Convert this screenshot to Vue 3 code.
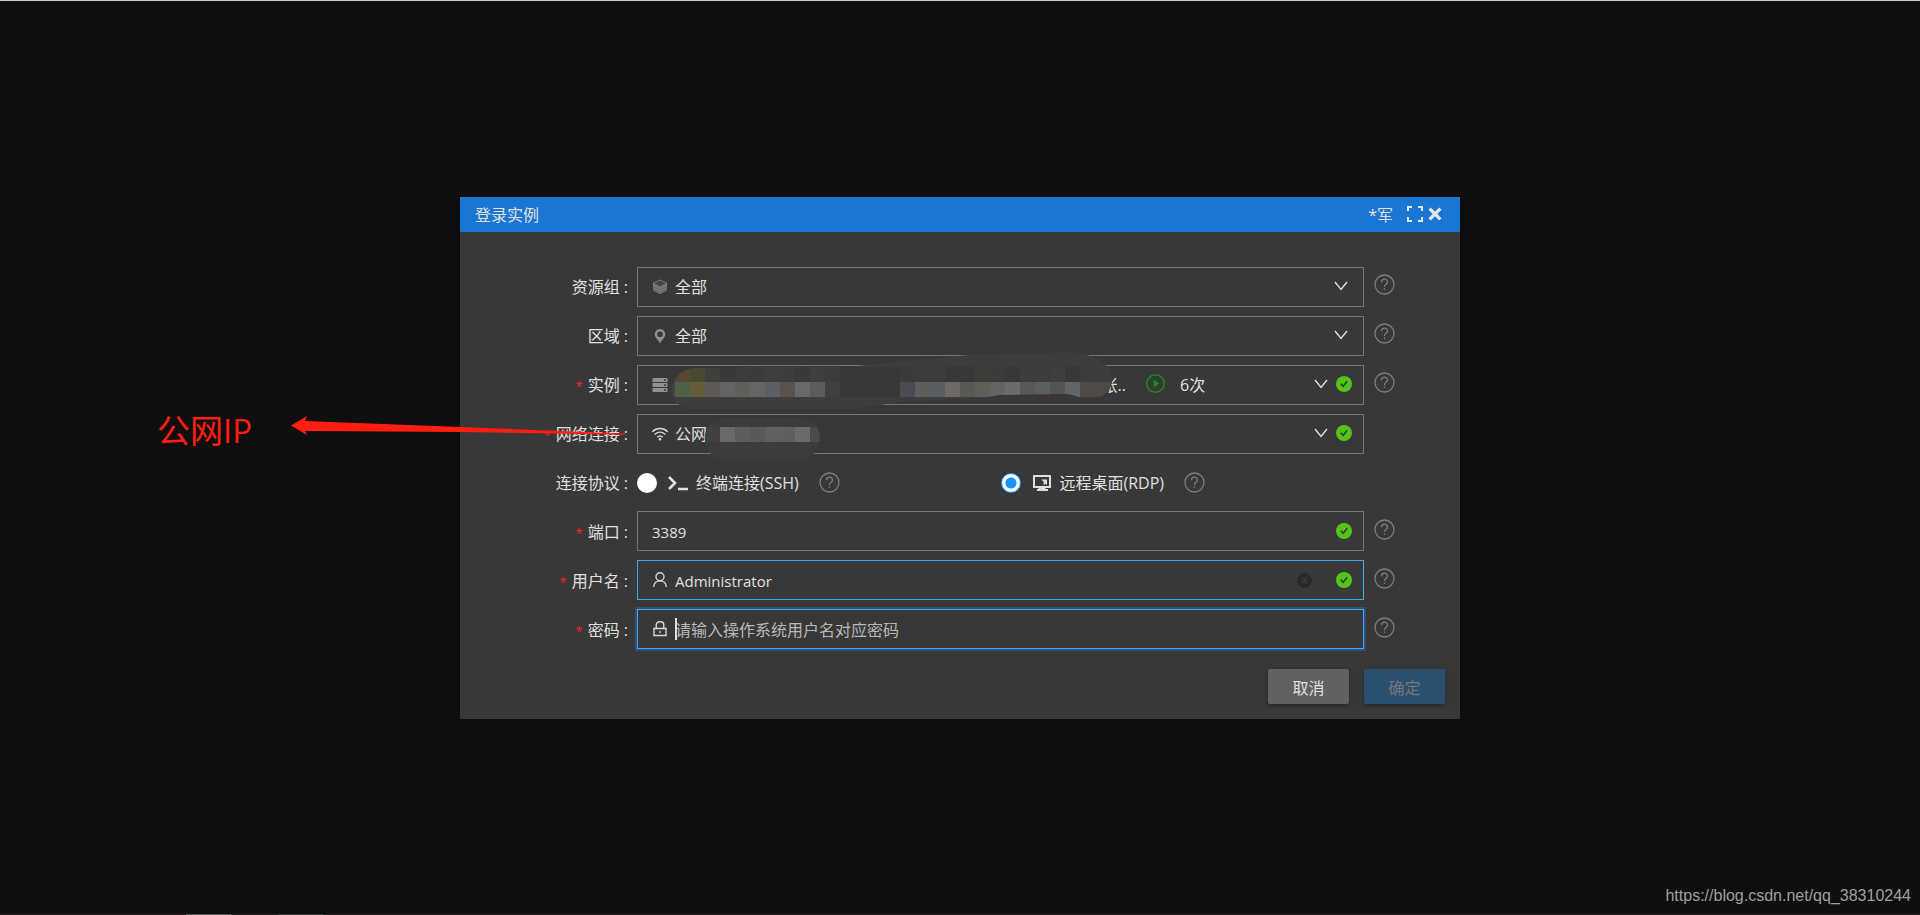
<script setup>
import { ref } from 'vue'

const protocol = ref('rdp')
const port = ref('3389')
const username = ref('Administrator')
const password = ref('')

const nameLower = [
  [660, '#444444'], [675, '#4f6048'], [690, '#655c38'], [705, '#5c5a57'], [720, '#656364'], [735, '#5f5f5b'],
  [750, '#656565'], [765, '#5c6064'], [780, '#57534d'], [795, '#666a6c'], [810, '#5c5c5c'],
  [825, '#42403c'], [840, '#383838'], [855, '#383838'], [870, '#383838'], [885, '#383838'],
  [900, '#4b4c51'], [915, '#5f5d59'], [930, '#5a5e62'], [945, '#6d6a67'], [960, '#5a5855'],
  [975, '#5f5f58'], [990, '#636462'], [1005, '#6d6b68'], [1020, '#575859'], [1035, '#5a5f60'],
  [1050, '#545454'], [1065, '#636468'], [1080, '#4d4a47'], [1095, '#4d4a47'],
]
const nameUpper = [
  [675, '#574733'], [690, '#474a33'], [705, '#3f3f3e'], [720, '#393939'], [735, '#3c3c3c'],
  [750, '#3b3b3b'], [765, '#3e3e3e'], [780, '#3e3d3c'], [795, '#393939'], [810, '#3f3f3f'],
  [825, '#3d3c3b'], [840, '#383838'], [855, '#383838'], [870, '#383838'], [885, '#383838'],
  [900, '#393c3b'], [915, '#3d3c3b'], [930, '#3a3c3e'], [945, '#383838'], [960, '#383838'],
  [975, '#3d3c3b'], [990, '#393c3b'], [1005, '#383838'], [1020, '#3d3d3d'], [1035, '#3d3d3d'],
  [1050, '#3f3f3f'], [1065, '#383838'], [1080, '#3d3c39'], [1095, '#3d3d3d'],
]
const ipBlocks = [
  [720, '#6a686a'], [735, '#5c5d60'], [750, '#5a5958'], [765, '#606063'],
  [780, '#5f5e60'], [795, '#686a6d'], [810, '#4d4b49'],
]
</script>

<template>
  <main class="page">
    <section class="dialog" role="dialog" aria-labelledby="dialog-title">
      <header class="titlebar">
        <h1 id="dialog-title">登录实例</h1>
        <span class="account">*军</span>
        <button class="bar-btn" type="button" aria-label="全屏">
          <svg width="16" height="16" viewBox="0 0 16 16" fill="none" stroke="#e2e6ea" stroke-width="2"><path d="M1 5V1h4M11 1h4v4M15 11v4h-4M5 15H1v-4" /></svg>
        </button>
        <button class="bar-btn close" type="button" aria-label="关闭">
          <svg width="14" height="14" viewBox="0 0 14 14" stroke="#e2e6ea" stroke-width="3.4"><path d="M1.600 1.600l10.800 10.800M12.400 1.600L1.600 12.400" /></svg>
        </button>
      </header>

      <form class="form" @submit.prevent>
        <div class="row">
          <label class="label" for="group">资源组<i>:</i></label>
          <div class="field">
            <svg class="lead" viewBox="0 0 16 16"><path d="M8 1L1 4.300l7 3.500 7-3.500z" fill="#444" stroke="#8a8a8a" stroke-width=".8" /><path d="M1 4.800v6.700L8 15V8.200zM15 4.800v6.700L8 15V8.200z" fill="#7d7d7d" /><path d="M1 7.300l7 3.500 7-3.500M1 9.800l7 3.500 7-3.500" fill="none" stroke="#555" stroke-width=".7" /></svg>
            <select id="group" class="control"><option>全部</option></select>
            <svg class="chevron last" viewBox="0 0 14 10"><path d="M1 1l6 7.500L13 1" /></svg>
          </div>
          <button class="help" type="button" aria-label="帮助"><svg viewBox="0 0 21 21"><circle cx="10.500" cy="10.500" r="9.500" /><path d="M7.500 8.300c0-4.100 6-4 6-.3 0 2.300-3 2.300-3 5" /><path d="M10.500 14.300v1.600" /></svg></button>
        </div>

        <div class="row">
          <label class="label" for="region">区域<i>:</i></label>
          <div class="field">
            <svg class="lead" viewBox="0 0 16 16"><path fill="#8f8f8f" fill-rule="evenodd" d="M8 1a5.300 5.300 0 0 0-5.300 5.300c0 3.200 3.400 5.400 5.300 8.900 1.900-3.500 5.300-5.700 5.300-8.900A5.300 5.300 0 0 0 8 1zm0 2.500a2.800 2.800 0 1 1 0 5.600 2.800 2.800 0 0 1 0-5.600z" /></svg>
            <select id="region" class="control"><option>全部</option></select>
            <svg class="chevron last" viewBox="0 0 14 10"><path d="M1 1l6 7.500L13 1" /></svg>
          </div>
          <button class="help" type="button" aria-label="帮助"><svg viewBox="0 0 21 21"><circle cx="10.500" cy="10.500" r="9.500" /><path d="M7.500 8.300c0-4.100 6-4 6-.3 0 2.300-3 2.300-3 5" /><path d="M10.500 14.300v1.600" /></svg></button>
        </div>

        <div class="row">
          <label class="label" for="instance"><b>*</b>实例<i>:</i></label>
          <div class="field">
            <svg class="lead" viewBox="0 0 16 16"><g fill="#919191"><rect x="0.500" y="1" width="15" height="4" rx=".8" /><rect x="0.500" y="6" width="15" height="4" rx=".8" /><rect x="0.500" y="11" width="15" height="4" rx=".8" /></g><path d="M12 3h2M12 8h2M12 13h2" stroke="#383838" stroke-width="1.500" /></svg>
            <span class="instance-name">张..</span>
            <svg class="play" viewBox="0 0 19 19"><circle cx="9.500" cy="9.500" r="8.700" fill="none" stroke="#0d980d" stroke-width="1.400" /><path d="M7.600 5.500l5.500 4-5.500 4z" fill="#0d980d" /></svg>
            <select id="instance" class="control"><option>6次</option></select>
            <svg class="chevron" viewBox="0 0 14 10"><path d="M1 1l6 7.500L13 1" /></svg>
            <svg class="ok" viewBox="0 0 16 16"><circle cx="8" cy="8" r="8" fill="#52c41a" /><path d="M4.800 7.800l2.400 2.500 4-5" /></svg>
          </div>
          <button class="help" type="button" aria-label="帮助"><svg viewBox="0 0 21 21"><circle cx="10.500" cy="10.500" r="9.500" /><path d="M7.500 8.300c0-4.100 6-4 6-.3 0 2.300-3 2.300-3 5" /><path d="M10.500 14.300v1.600" /></svg></button>
        </div>

        <div class="row">
          <label class="label" for="network"><b>*</b>网络连接<i>:</i></label>
          <div class="field">
            <svg class="lead" viewBox="0 0 16 16" fill="none" stroke="#d8d8d8" stroke-width="1.500"><path d="M.3 5.700c4.300-4.200 11.100-4.200 15.400 0M2.800 8.500c3.100-2.900 7.300-2.900 10.400 0M5.300 11.200c1.700-1.600 3.700-1.600 5.400 0" /><circle cx="8" cy="13.200" r="1.300" fill="#d8d8d8" stroke="none" /></svg>
            <select id="network" class="control"><option>公网</option></select>
            <svg class="chevron" viewBox="0 0 14 10"><path d="M1 1l6 7.500L13 1" /></svg>
            <svg class="ok" viewBox="0 0 16 16"><circle cx="8" cy="8" r="8" fill="#52c41a" /><path d="M4.800 7.800l2.400 2.500 4-5" /></svg>
          </div>
        </div>

        <div class="row protocol-row" role="radiogroup" aria-labelledby="protocol-label">
          <span id="protocol-label" class="label">连接协议<i>:</i></span>
          <div class="radios">
            <div class="option">
              <input id="ssh" v-model="protocol" type="radio" name="protocol" value="ssh">
              <label for="ssh">
                <svg width="20" height="16" viewBox="0 0 20 16" fill="none" stroke="#e0e0e0" stroke-width="2.600"><path d="M1 2l6 6-6 6M10 14h10" /></svg>
                终端连接(SSH)
              </label>
              <button class="help" type="button" aria-label="帮助"><svg viewBox="0 0 21 21"><circle cx="10.500" cy="10.500" r="9.500" /><path d="M7.500 8.300c0-4.100 6-4 6-.3 0 2.300-3 2.300-3 5" /><path d="M10.500 14.300v1.600" /></svg></button>
            </div>
            <div class="option">
              <input id="rdp" v-model="protocol" type="radio" name="protocol" value="rdp">
              <label for="rdp">
                <svg width="20" height="16" viewBox="0 0 20 16"><path d="M2 1h16v11H2z" fill="none" stroke="#e0e0e0" stroke-width="2" /><path d="M6.500 12h7v2H16v2H5v-2h1.500zM9.500 4.500h5.500v5.500l-1.500-1.500-1 1.500-1.300-1.300 1-1.200z" fill="#e0e0e0" /></svg>
                远程桌面(RDP)
              </label>
              <button class="help" type="button" aria-label="帮助"><svg viewBox="0 0 21 21"><circle cx="10.500" cy="10.500" r="9.500" /><path d="M7.500 8.300c0-4.100 6-4 6-.3 0 2.300-3 2.300-3 5" /><path d="M10.500 14.300v1.600" /></svg></button>
            </div>
          </div>
        </div>

        <div class="row typed">
          <label class="label" for="port"><b>*</b>端口<i>:</i></label>
          <div class="field">
            <input id="port" v-model="port" class="control" type="text">
            <svg class="ok" viewBox="0 0 16 16"><circle cx="8" cy="8" r="8" fill="#52c41a" /><path d="M4.800 7.800l2.400 2.500 4-5" /></svg>
          </div>
          <button class="help" type="button" aria-label="帮助"><svg viewBox="0 0 21 21"><circle cx="10.500" cy="10.500" r="9.500" /><path d="M7.500 8.300c0-4.100 6-4 6-.3 0 2.300-3 2.300-3 5" /><path d="M10.500 14.300v1.600" /></svg></button>
        </div>

        <div class="row typed">
          <label class="label" for="username"><b>*</b>用户名<i>:</i></label>
          <div class="field active">
            <svg class="lead" viewBox="0 0 16 16" fill="none" stroke="#d8d8d8" stroke-width="1.400"><circle cx="8" cy="4.800" r="4" /><path d="M1.700 15c.3-3.700 2.500-6.100 6.300-6.100s6 2.400 6.300 6.100" /></svg>
            <input id="username" v-model="username" class="control" type="text">
            <button class="clear" type="button" aria-label="清除"><svg width="15" height="15" viewBox="0 0 15 15"><circle cx="7.500" cy="7.500" r="7.500" fill="#292929" /><path d="M5 4.500l5 6M10 4.500l-5 6" stroke="#3c3c3c" stroke-width="1.200" /></svg></button>
            <svg class="ok" viewBox="0 0 16 16"><circle cx="8" cy="8" r="8" fill="#52c41a" /><path d="M4.800 7.800l2.400 2.500 4-5" /></svg>
          </div>
          <button class="help" type="button" aria-label="帮助"><svg viewBox="0 0 21 21"><circle cx="10.500" cy="10.500" r="9.500" /><path d="M7.500 8.300c0-4.100 6-4 6-.3 0 2.300-3 2.300-3 5" /><path d="M10.500 14.300v1.600" /></svg></button>
        </div>

        <div class="row typed">
          <label class="label" for="password"><b>*</b>密码<i>:</i></label>
          <div class="field active focused">
            <svg class="lead" viewBox="0 0 16 16" fill="none" stroke="#d8d8d8" stroke-width="1.400"><path d="M2 7.500h12v7H2zM4.200 7.500V4A3.300 3.300 0 0 1 7.500.7h1A3.300 3.300 0 0 1 11.800 4v3.500M8 10v2" /></svg>
            <span class="caret"></span>
            <input id="password" v-model="password" class="control" type="password" placeholder="请输入操作系统用户名对应密码">
          </div>
          <button class="help" type="button" aria-label="帮助"><svg viewBox="0 0 21 21"><circle cx="10.500" cy="10.500" r="9.500" /><path d="M7.500 8.300c0-4.100 6-4 6-.3 0 2.300-3 2.300-3 5" /><path d="M10.500 14.300v1.600" /></svg></button>
        </div>

        <footer class="actions">
          <button class="btn cancel" type="button">取消</button>
          <button class="btn confirm" type="submit" disabled>确定</button>
        </footer>
      </form>

      <svg class="smudge" width="460" height="120" viewBox="665 345 460 120" aria-hidden="true">
        <defs>
          <clipPath id="name-blob"><path d="M672 391C672 376 685 367 699 368L850 367C885 363 910 360 940 358C970 354 1000 354 1045 354C1060 351 1080 351 1092 357C1106 362 1112 370 1112 380C1112 390 1104 398 1092 399C1078 399 1075 394 1065 394L1000 395C975 400 940 399 900 402C880 405 860 409 845 409L695 409C680 409 672 401 672 391Z" /></clipPath>
          <clipPath id="ip-blob"><path d="M705 438C705 427 713 418 727 418L799 418C812 419 820 428 820 438C820 450 810 461 798 461L727 461C714 461 705 450 705 438Z" /></clipPath>
        </defs>
        <g clip-path="url(#name-blob)">
          <rect x="665" y="345" width="460" height="75" fill="#3d3d3d" />
          <rect v-for="[x, fill] in nameUpper" :key="'u' + x" :x="x" y="367" width="15" height="15" :fill="fill" />
          <rect v-for="[x, fill] in nameLower" :key="'l' + x" :x="x" y="382" width="15" height="15" :fill="fill" />
        </g>
        <g clip-path="url(#ip-blob)">
          <rect x="700" y="415" width="125" height="50" fill="#3c3c3c" />
          <rect x="705" y="427" width="15" height="15" fill="#404040" />
          <rect v-for="[x, fill] in ipBlocks" :key="'i' + x" :x="x" y="427" width="15" height="15" :fill="fill" />
        </g>
      </svg>

      <div class="note">公网IP</div>
      <svg class="arrow" width="340" height="24" viewBox="290 414 340 24" aria-hidden="true">
        <path d="M291 425.500L307 416l-2 5 155 6 165 6.500v1.200L460 432l-155-1 2 4z" fill="#ff1e10" />
      </svg>
    </section>

    <a class="watermark" href="https://blog.csdn.net/qq_38310244">https://blog.csdn.net/qq_38310244</a>
    <div class="edge"><span></span><span></span></div>
  </main>
</template>

<style>
body {
  margin: 0;
  background: #0e0e0e;
}
</style>

<style scoped>
.page,
.page * {
  box-sizing: border-box;
}
.page {
  position: relative;
  display: flex;
  align-items: center;
  justify-content: center;
  min-height: 100vh;
  border-top: 1px solid #c9d1cd;
  color: #e0e0e0;
  font: 16px/24px "Open Sans", "Noto Sans CJK SC", sans-serif;
}
button,
input,
select {
  margin: 0;
  padding: 0;
  border: 0;
  border-radius: 0;
  outline: 0;
  background: none;
  color: inherit;
  font: inherit;
}
svg {
  display: block;
  flex: none;
}
.dialog {
  position: relative;
  width: 100%;
  max-width: 1000px;
  background: #383838;
}
.titlebar {
  display: flex;
  align-items: center;
  height: 35px;
  padding: 0 18px 0 15px;
  background: #1976d2;
}
h1 {
  flex: 1;
  margin: 0;
  font-size: 16px;
  font-weight: 400;
}
.account {
  margin-right: 14px;
}
.bar-btn {
  padding-bottom: 2px;
}
.close {
  margin-left: 5px;
}
.form {
  display: flex;
  flex-direction: column;
  gap: 9px;
  padding: 35px 15px 15px 0;
}
.row {
  display: grid;
  grid-template-columns: 177px 1fr 81px;
  align-items: center;
}
.label {
  display: flex;
  align-items: center;
  justify-content: flex-end;
  padding-right: 9px;
}
.label i {
  margin-left: 4px;
  font-style: normal;
}
.label b {
  height: 16px;
  margin-right: 4px;
  color: #f5222d;
  font: 16px/24px "Liberation Mono", monospace;
}
.field {
  position: relative;
  display: flex;
  align-items: center;
  height: 40px;
  padding: 0 11px 0 14px;
  border: 1px solid #757575;
}
.active {
  border-color: #40a9ff;
}
.focused {
  box-shadow: 0 0 0 2px rgba(24, 144, 255, 0.3);
}
.lead {
  width: 16px;
  height: 16px;
  margin-right: 7px;
}
.control {
  flex: 1;
  min-width: 0;
  height: 38px;
  appearance: none;
}
input.control {
  padding-top: 2px;
  font-size: 15px;
}
input.control::placeholder {
  color: #b8b8b8;
  font-size: 16px;
  opacity: 1;
}
.instance-name {
  width: 451px;
  text-align: right;
}
.play {
  width: 19px;
  height: 19px;
  margin: 0 15px 3px 20px;
}
.chevron {
  width: 14px;
  height: 10px;
  margin: 0 8px 2px 0;
  fill: none;
  stroke: #e0e0e0;
  stroke-width: 1.4;
}
.chevron.last {
  margin-right: 4px;
}
.ok {
  width: 16px;
  height: 16px;
  margin-bottom: 2px;
}
.ok path {
  fill: none;
  stroke: #383838;
  stroke-width: 1.5;
}
.clear {
  margin-right: 24px;
}
.help {
  width: 21px;
  margin-left: 10px;
  padding-bottom: 5px;
}
.help svg {
  width: 21px;
  height: 21px;
  fill: none;
  stroke: #7c7c7c;
  stroke-width: 1.3;
}
.typed .label {
  padding-top: 2px;
}
.typed .ok {
  margin-bottom: 0;
}
.typed .help {
  padding-bottom: 3px;
}
.caret {
  position: absolute;
  left: 37px;
  width: 2px;
  height: 22px;
  background: #e0e0e0;
}
.protocol-row {
  height: 39px;
}
.radios {
  display: grid;
  grid-template-columns: 1fr 1fr;
}
.option {
  display: flex;
  align-items: center;
}
.option input {
  width: 20px;
  height: 20px;
  margin-right: 11px;
  border-radius: 50%;
  background: #fff;
  appearance: none;
}
.option input:checked {
  border: 1px solid #1890ff;
  background: radial-gradient(circle, #1890ff 5px, #fff 6px);
}
.option label {
  display: flex;
  align-items: center;
  gap: 8px;
}
.option .help {
  margin-left: 20px;
  padding-bottom: 0;
}
.actions {
  display: flex;
  justify-content: flex-end;
  gap: 15px;
  margin-top: 11px;
}
.btn {
  width: 81px;
  height: 35px;
  padding-top: 2px;
  border-radius: 2px;
  background: #616161;
  box-shadow: 0 2px 4px rgba(0, 0, 0, 0.35);
}
.confirm {
  background: #2b506f;
  color: #74797d;
}
.smudge {
  position: absolute;
  top: 148px;
  left: 205px;
  pointer-events: none;
}
.note {
  position: absolute;
  top: 210px;
  left: -303px;
  color: #ff1e10;
  font-size: 33px;
  line-height: 48px;
}
.arrow {
  position: absolute;
  top: 217px;
  left: -170px;
  pointer-events: none;
}
.watermark {
  position: absolute;
  right: 9px;
  bottom: 7px;
  color: #a0a0a0;
  font-family: "Liberation Sans", sans-serif;
  text-decoration: none;
}
.edge {
  position: absolute;
  right: 0;
  bottom: 0;
  left: 0;
  display: flex;
  gap: 47px;
  height: 1px;
  padding-left: 186px;
  background: #2a2024;
}
.edge span {
  width: 45px;
  background: #555;
}
.edge span + span {
  background: #3c3a3b;
}
</style>
